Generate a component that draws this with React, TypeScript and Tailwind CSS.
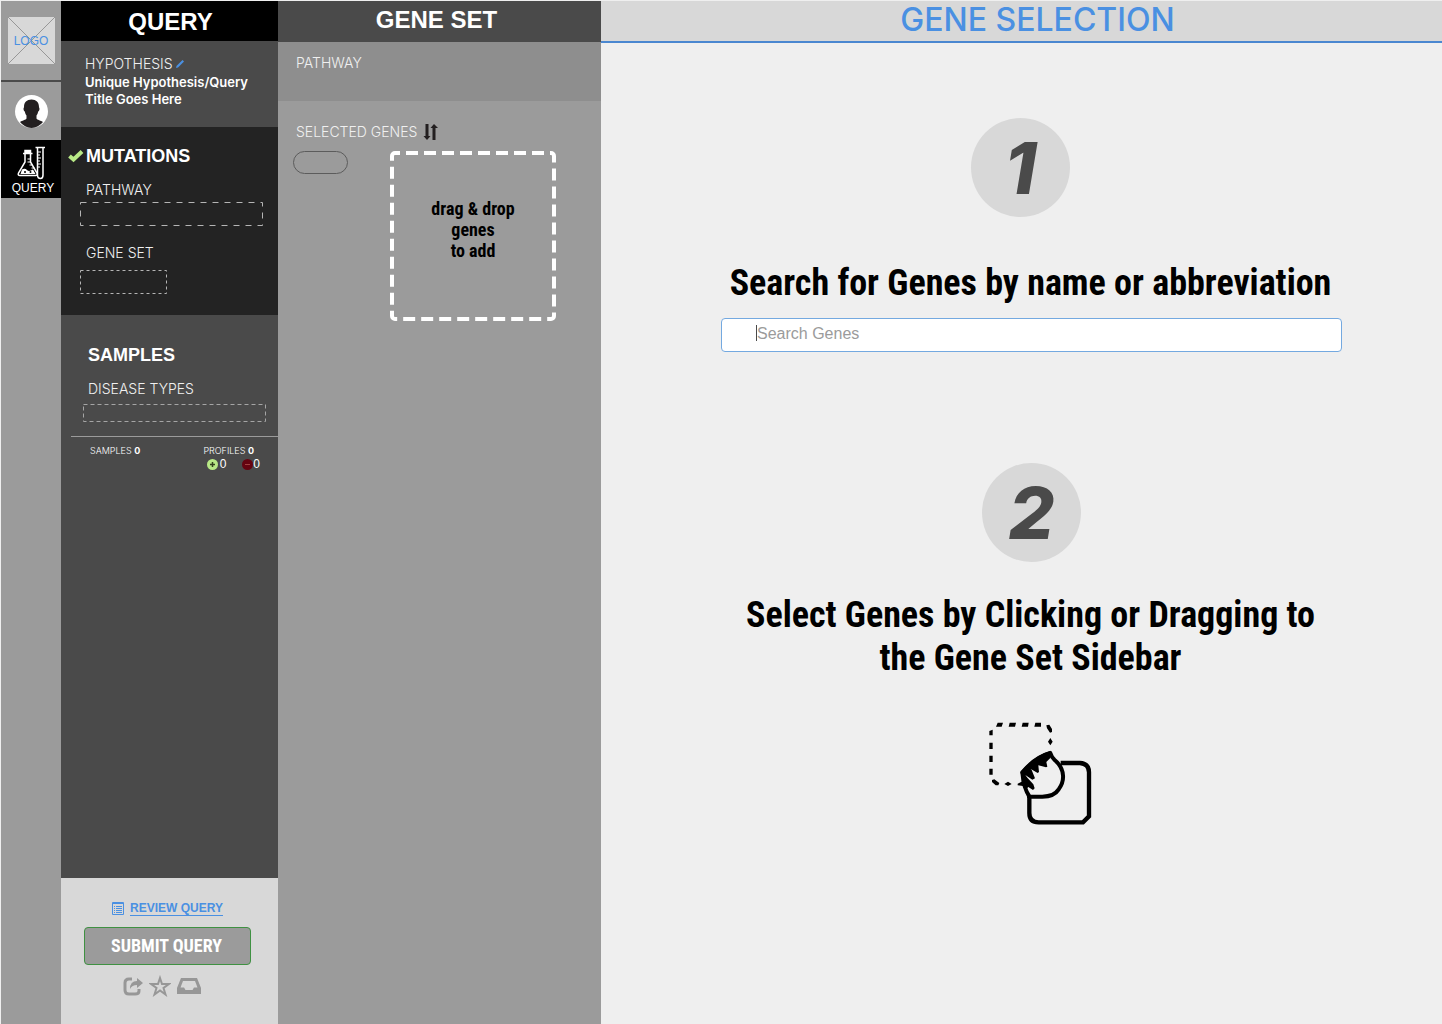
import React from "react";

const narrow = "font-['Roboto_Condensed','Liberation_Sans',sans-serif]";
const light = "font-['Inter',sans-serif] font-light";

function LogoBox() {
  return (
    <a href="#home" className="relative mx-auto mt-4 flex size-[47px] items-center justify-center bg-[#d8d8d8]">
      <svg className="absolute inset-0 size-full" viewBox="0 0 47 47" stroke="#979797" fill="none" aria-hidden="true">
        <path d="M0 0 47 47M47 0 0 47" />
      </svg>
      <span className="relative text-xs text-[#4a90e2]">LOGO</span>
    </a>
  );
}

function Avatar() {
  return (
    <button type="button" aria-label="Profile" className="mx-auto mt-[13px] block size-[33px]">
      <svg viewBox="0 0 33 33" aria-hidden="true">
        <circle cx="16.5" cy="16.5" r="16.5" fill="#fff" />
        <path
          d="M16.500 4.500c4.700 0 7.500 2.800 7.500 7.500 0 .8.600 1 .5 2-.1 1.500-.8 2.200-1.300 2.500-.4 2-1 3.300-1.700 4v3c.5 1.500 4.500 2 6.500 3.500A16.500 16.500 0 0 1 16.500 33 16.500 16.500 0 0 1 5 27c2-1.500 6-2 6.500-3.500v-3c-.7-.7-1.300-2-1.700-4-.5-.3-1.200-1-1.300-2.500-.1-1 .5-1.200.5-2 0-4.700 2.800-7.500 7.500-7.500z"
          fill="#231f20"
        />
      </svg>
    </button>
  );
}

function FlaskIcon() {
  return (
    <svg width="28" height="34" viewBox="0 0 28 34" fill="none" stroke="#fff" strokeWidth="1.500" aria-hidden="true">
      <path d="M6 7.500h9.500M8 4.500h5.500v3H8z" fill="#fff" />
      <path d="M8 8v8L1.500 27q-1 2.500 1.500 2.500h15.500q2.500 0 1.500-2.500L13.500 16V8" />
      <path d="M10.500 13h3M10.500 16h3M12.500 19h3M14.500 22h3" strokeWidth="1" />
      <path d="M5 23.500q3-1.500 5 .5t6-.5l2.500 4.500h-15z" fill="#fff" stroke="none" />
      <circle cx="8" cy="26" r="1" fill="#000" stroke="none" />
      <circle cx="13.500" cy="26" r="1" fill="#000" stroke="none" />
      <path d="M18.500 1.500H28" />
      <path d="M20.500 2v27q0 3.500 3 3.500 2.500 0 2.500-3.500V2" />
      <path d="M21 6h3M21 9h2M21 12h3M21 15h2M21 18h3M21 21h2" strokeWidth="1" />
    </svg>
  );
}

function GrabIcon() {
  return (
    <svg width="103" height="103" viewBox="87 67 309 309" fill="none" aria-hidden="true">
      <path
        fill="#000"
        d="M113 69h16l-4 12h-17zM149 69h19l-3 12h-19zM188 69h18l-2 12h-19zM226 69h17v12h-20zM259 77l9-2 8 13v9l-6 2-9-13zM271 115l7 11-7 11-7-11zM88 94l10-4v17H88zM88 129h10v19H88zM88 168h10v19H88zM88 207h10v18H88zM96 241l7-2 15 11-3 7h-8l-11-10zM133 253l11-7 11 7-11 6z"
      />
      <path
        d="M302 190h58q27 2 27 28v132l-18 18H236q-28 0-28-28v-44q0-14-6-26l-12-22"
        stroke="#000"
        strokeWidth="13"
      />
      <path
        d="M271 160q-46 13-84 58 4 50 22 73h38q36-1 49-22 15-20 13-42-2-27-25-46-9-8-13-21z"
        fill="#efefef"
        stroke="#000"
        strokeWidth="12"
        strokeLinejoin="round"
      />
      <path
        d="M273 153Q222 167 181 218l8 26-16 8v5l16 2 6 12 10-9 14 9 5-5-4-12-18-20-6-8 21 14 8-4-10-25-4-4 22 13 4-3-2-20 23 6 4-2-3-14 12-12z"
        fill="#000"
      />
    </svg>
  );
}

function FieldLabel({ children, className = "" }: { children: React.ReactNode; className?: string }) {
  return <h3 className={`${light} text-sm leading-4 text-[#f0f0f0] ${className}`}>{children}</h3>;
}

function StepNumber({ children }: { children: string }) {
  return (
    <div className="flex size-[99px] items-center justify-center rounded-full bg-[#d8d8d8] font-['Inter',sans-serif] text-7xl font-extrabold italic text-[#4a4a4a]">
      {children}
    </div>
  );
}

export default function App() {
  return (
    <div className="flex min-h-screen bg-[#efefef] pl-px pt-px font-['Liberation_Sans',Arial,sans-serif]">
      <nav className="w-15 shrink-0 bg-[#9b9b9b]" aria-label="Main">
        <LogoBox />
        <div className="mt-4 border-t-2 border-[#4a4a4a]" />
        <Avatar />
        <a href="#query" className="mt-3 flex h-[58px] flex-col items-center bg-black pt-1.5 text-xs text-white">
          <FlaskIcon />
          <span className="pl-1 leading-4">QUERY</span>
        </a>
      </nav>

      <aside className="flex w-[217px] shrink-0 flex-col bg-[#4a4a4a] text-white">
        <h1 className="h-10 bg-black pl-0.5 text-center text-2xl leading-[42px] font-bold">QUERY</h1>

        <section className="h-[86px] pl-6 pt-[15px]">
          <div className="flex items-center gap-0.5">
            <FieldLabel>HYPOTHESIS</FieldLabel>
            <button type="button" aria-label="Edit hypothesis">
              <svg width="10" height="10" viewBox="0 0 10 10" fill="#4a90e2" aria-hidden="true">
                <path d="M1 9l.5-2 6-6L9 2.500l-6 6z" />
              </svg>
            </button>
          </div>
          <p className="mt-0.5 font-['Inter',sans-serif] text-[13px] leading-[17px] font-semibold">
            Unique Hypothesis/Query
            <br />
            Title Goes Here
          </p>
        </section>

        <section className="h-[188px] bg-[#232323] pl-[19px] pt-[17px]">
          <div className="-ml-3 flex items-center gap-0.5">
            <svg width="16" height="13" viewBox="0 0 16 13" fill="none" stroke="#b8e986" strokeWidth="4" aria-hidden="true">
              <path d="M1.500 6 5.500 9.500 14 1.500" />
            </svg>
            <h2 className="text-lg leading-6 font-bold">MUTATIONS</h2>
          </div>
          <FieldLabel className="mt-3.5 pl-1.5">PATHWAY</FieldLabel>
          <svg className="mt-1 block" width="183" height="24" fill="none" stroke="#b5b5b5" aria-hidden="true">
            <rect x="0.500" y="0.500" width="182" height="23" strokeDasharray="6 6" />
          </svg>
          <FieldLabel className="mt-[19px] pl-1.5">GENE SET</FieldLabel>
          <svg className="mt-[9px] block" width="87" height="24" fill="none" stroke="#b5b5b5" aria-hidden="true">
            <rect x="0.500" y="0.500" width="86" height="23" strokeDasharray="3 3" />
          </svg>
        </section>

        <section className="flex-1 pl-[22px] pt-7">
          <h2 className="pl-[5px] text-lg leading-6 font-bold">SAMPLES</h2>
          <FieldLabel className="mt-3.5 pl-[5px]">DISEASE TYPES</FieldLabel>
          <svg className="mt-[7px] block" width="183" height="18" fill="none" stroke="#a5a5a5" aria-hidden="true">
            <rect x="0.500" y="0.500" width="182" height="17" strokeDasharray="4 3" />
          </svg>
          <div className="-ml-3 mt-3.5 flex justify-between border-t border-[#9b9b9b] pl-[19px] pr-4 pt-2">
            <p className={`${light} text-[9px] leading-3`}>
              SAMPLES <b className="font-bold">0</b>
            </p>
            <div>
              <p className={`${light} pr-2 text-right text-[9px] leading-3`}>
                PROFILES <b className="font-bold">0</b>
              </p>
              <div className="flex items-center justify-end gap-4 pr-0.5 text-xs leading-[14px]">
                <span className="flex items-center gap-0.5">
                  <svg width="11" height="11" viewBox="0 0 11 11" aria-hidden="true">
                    <circle cx="5.500" cy="5.500" r="5.500" fill="#b8e986" />
                    <path d="M5.500 3v5M3 5.500h5" stroke="#33431f" strokeWidth="1.500" />
                  </svg>
                  0
                </span>
                <span className="flex items-center">
                  <svg width="11" height="11" viewBox="0 0 11 11" aria-hidden="true">
                    <circle cx="5.500" cy="5.500" r="5.500" fill="#650310" />
                    <path d="M3 5.500h5" stroke="#a04040" />
                  </svg>
                  0
                </span>
              </div>
            </div>
          </div>
        </section>

        <footer className="flex h-[146px] flex-col items-center bg-[#d8d8d8] pr-1 pt-[23px]">
          <a href="#review" className="flex items-center gap-1.5 text-xs leading-4 font-bold text-[#4a90e2]">
            <svg width="12" height="13" viewBox="0 0 12 13" fill="none" stroke="#4a90e2" aria-hidden="true">
              <path d="M0.500 0.500h11v12H.5zM1 1.500h10M2 4.500h1M4 4.500h6M2 6.500h1M4 6.500h6M2 8.500h1M4 8.500h6M2 10.500h1M4 10.500h6" />
            </svg>
            <span className="border-b border-[#4a90e2] leading-[14px]">REVIEW QUERY</span>
          </a>
          <button
            type="button"
            className={`${narrow} mt-[11px] h-[38px] w-[167px] rounded-sm border border-[#3f9142] bg-[#9b9b9b] pr-0.5 text-lg font-bold`}
          >
            SUBMIT QUERY
          </button>
          <div className="mt-2.5 mr-3 flex items-center gap-1.5 text-[#979797]">
            <button type="button" aria-label="Share">
              <svg width="20" height="20" viewBox="0 0 20 20" fill="none" stroke="currentColor" aria-hidden="true">
                <path d="M9 3H6Q2 3 2 7v7q0 4 4 4h6q4 0 4-3v-2" strokeWidth="3" />
                <path d="M7 13q0-8 7-8V2l6 5-6 5V9q-5 0-7 4z" fill="currentColor" stroke="none" />
              </svg>
            </button>
            <button type="button" aria-label="Favorite">
              <svg width="22" height="22" viewBox="0 0 22 22" fill="none" stroke="currentColor" strokeWidth="2" aria-hidden="true">
                <path d="M11 3l2 6h7l-5.500 4 2 6.500L11 15.500l-5.500 4 2-6.500L2 9h7z" />
              </svg>
            </button>
            <button type="button" aria-label="Inbox">
              <svg width="24" height="18" viewBox="0 0 24 18" fill="currentColor" fillRule="evenodd" aria-hidden="true">
                <path d="M4 1h16l4 10v6H0v-6zM6 4 3.500 10.500H7L8.500 13h7L17 10.500h3.500L18 4z" />
              </svg>
            </button>
          </div>
        </footer>
      </aside>

      <aside className="w-[323px] shrink-0 bg-[#9b9b9b]">
        <h1 className="h-[41px] bg-[#4a4a4a] pr-1.5 text-center text-2xl leading-[38px] font-bold text-white">GENE SET</h1>
        <section className="h-[59px] bg-[#8e8e8e] pl-[18px] pt-[13px]">
          <FieldLabel>PATHWAY</FieldLabel>
        </section>
        <section className="pl-[15px] pr-[45px] pt-[23px]">
          <div className="flex items-center gap-1.5 pl-[3px]">
            <FieldLabel>SELECTED GENES</FieldLabel>
            <button type="button" aria-label="Sort genes">
              <svg width="15" height="16" viewBox="0 0 15 16" fill="#231f20" aria-hidden="true">
                <path d="M2.500 0h3v12H7.500L4 16 .5 12h2zM9.500 16h3V4h2.500l-4-4-3.500 4h2z" />
              </svg>
            </button>
          </div>
          <div className="mt-[11px] flex items-start justify-between">
            <button type="button" aria-label="Gene" className="h-[23px] w-[55px] rounded-full border border-[#5c5c5c]" />
            <div className="relative h-[170px] w-[166px]">
              <svg className="absolute inset-0 size-full" fill="none" stroke="#fff" strokeWidth="4" aria-hidden="true">
                <rect x="2" y="2" width="162" height="166" rx="3" strokeDasharray="12 6" strokeDashoffset="-11" />
              </svg>
              <p className={`${narrow} relative pt-[47px] text-center text-lg leading-[21px] font-bold text-black`}>
                drag &amp; drop
                <br />
                genes
                <br />
                to add
              </p>
            </div>
          </div>
        </section>
      </aside>

      <main className="min-w-0 flex-1">
        <h1 className="h-[42px] border-b-2 border-[#4a87d0] bg-[#d8d8d8] pl-8 text-center font-['Inter',sans-serif] text-[32px] leading-[38px] font-medium text-[#4a90e2]">
          GENE SELECTION
        </h1>
        <div className="pl-5">
          <div className="mx-auto flex max-w-[621px] flex-col items-center pt-[75px] text-black">
            <div className="pr-[22px]">
              <StepNumber>1</StepNumber>
            </div>
            <label htmlFor="gene-search" className={`${narrow} mt-[45px] pr-0.5 text-center text-4xl leading-[43px] font-bold`}>
              Search for Genes by name or abbreviation
            </label>
            <div className="relative mt-[13px] w-full">
              <input
                id="gene-search"
                type="text"
                placeholder="Search Genes"
                className="block h-[34px] w-full rounded-sm border border-[#74a9e0] bg-white pb-0.5 pl-[35px] text-base outline-none placeholder:text-[#9b9b9b]"
              />
              <span className="absolute left-[35px] top-[7px] h-4 w-px bg-[#4a4a4a]" />
            </div>
            <div className="mt-[111px]">
              <StepNumber>2</StepNumber>
            </div>
            <p className={`${narrow} mt-8 pr-0.5 text-center text-4xl leading-[43px] font-bold`}>
              Select Genes by Clicking or Dragging to
              <br />
              the Gene Set Sidebar
            </p>
            <div className="mt-[42px] pl-[18px]">
              <GrabIcon />
            </div>
          </div>
        </div>
      </main>
    </div>
  );
}
